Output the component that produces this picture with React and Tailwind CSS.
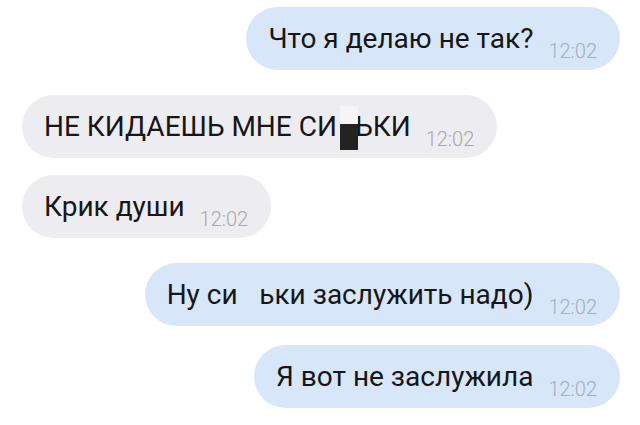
const messages = [
  { out: true, text: 'Что я делаю не так?', mt: 'mt-[7px]' },
  { out: false, text: 'НЕ КИДАЕШЬ МНЕ СИ', censor: 'box', rest: 'ЬКИ', mt: 'mt-[25px]' },
  { out: false, text: 'Крик души', mt: 'mt-[17px]' },
  { out: true, text: 'Ну си', censor: 'blank', rest: 'ьки заслужить надо)', mt: 'mt-[25px]' },
  { out: true, text: 'Я вот не заслужила', mt: 'mt-[19px]' },
];

const Bubble = ({ m }) => (
  <div
    className={`${m.mt} ${m.out ? 'self-end mr-[20px] bg-[#d7e6f9]' : 'self-start ml-[22px] bg-[#ededf1]'} h-[63px] rounded-full pl-[22px] pr-[23px] flex items-center`}
  >
    <div className="flex items-baseline pt-[1px]">
      <span className="text-[28px] leading-[33px] text-[#161616] whitespace-pre">
        {m.text}
        {m.censor === 'box' && (
          <span className="relative inline-block">
            <span className="text-transparent">С</span>
            <span className="absolute left-[3px] right-[-3px] top-[-4px] h-[18px] bg-[#f5f5f7]" />
            <span className="absolute left-[3px] right-[-3px] top-[14px] h-[26px] bg-[#232323]" />
          </span>
        )}
        {m.censor === 'blank' && <span className="text-transparent"> с</span>}
        {m.rest}
      </span>
      <span className={`ml-[15px] text-[20px] font-light translate-y-[10px] ${m.out ? 'text-[#a3aebd]' : 'text-[#a7a7ae]'}`}>12:02</span>
    </div>
  </div>
);

export default function App() {
  return (
    <div className="w-[640px] h-[425px] bg-white flex flex-col font-['Roboto',sans-serif] overflow-hidden">
      {messages.map((m, i) => (
        <Bubble key={i} m={m} />
      ))}
    </div>
  );
}
